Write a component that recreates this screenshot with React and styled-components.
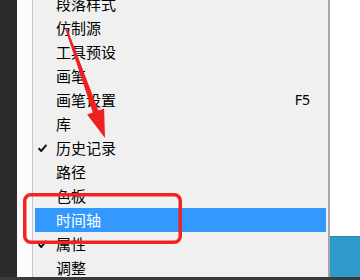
import React from "react";
import styled, { createGlobalStyle } from "styled-components";

const GlobalStyle = createGlobalStyle`
  html, body {
    margin: 0;
    padding: 0;
    background: #fff;
  }
  body {
    font-family: "Noto Sans CJK SC", "Noto Sans", sans-serif;
  }
`;

const ITEMS = [
  { label: "段落样式" },
  { label: "仿制源" },
  { label: "工具预设" },
  { label: "画笔" },
  { label: "画笔设置", shortcut: "F5" },
  { label: "库" },
  { label: "历史记录", checked: true },
  { label: "路径" },
  { label: "色板" },
  { label: "时间轴", active: true },
  { label: "属性", checked: true },
  { label: "调整" },
];

const Check = () => (
  <svg width="9" height="8" viewBox="0 0 9 8">
    <path d="M0.5 4.2 L3.2 7 L8.5 0.8" fill="none" stroke="#111" strokeWidth="2" />
  </svg>
);

const Annotation = () => (
  <Overlay width="360" height="280" viewBox="0 0 360 280">
    <rect
      x="24.75"
      y="194.75"
      width="155.5"
      height="47.5"
      rx="6"
      fill="none"
      stroke="#f02424"
      strokeWidth="3.5"
    />
    <polygon
      points="65.1,28.3 92.8,112.6 87.1,114.6 105,138 104.1,108.6 98.4,110.6 66.9,27.7"
      fill="#ee2020"
    />
  </Overlay>
);

export default function App() {
  return (
    <>
      <GlobalStyle />
      <Page>
        <Main>
          <LeftStrip />
          <Menu>
            <Gutter />
            <List>
              {ITEMS.map((it) => (
                <Item key={it.label} $active={it.active}>
                  <CheckCell>{it.checked && <Check />}</CheckCell>
                  <Label>{it.label}</Label>
                  <Shortcut>{it.shortcut}</Shortcut>
                </Item>
              ))}
            </List>
          </Menu>
          <RightPane>
            <WhiteArea />
            <BluePanel />
          </RightPane>
        </Main>
        <BottomBar />
        <Annotation />
      </Page>
    </>
  );
}

const Page = styled.div`
  position: relative;
  width: 360px;
  height: 280px;
  overflow: hidden;
  display: flex;
  flex-direction: column;
`;

const Main = styled.div`
  flex: 1;
  display: flex;
  min-height: 0;
`;

const LeftStrip = styled.div`
  width: 17px;
  background: #2b2b2b;
`;

const Menu = styled.div`
  width: 313px;
  display: flex;
  background: #f0f0f0;
  border-right: 2px solid #a6a6a6;
  box-sizing: border-box;
  overflow: hidden;
`;

const Gutter = styled.div`
  width: 15px;
  background: #fcfcfc;
  border-right: 1px solid #c6c6c6;
`;

const List = styled.div`
  flex: 1;
  padding: 0 2px;
  margin-top: -8px;
  display: flex;
  flex-direction: column;
`;

const Item = styled.div`
  height: 24px;
  display: grid;
  grid-template-columns: 21px 1fr auto;
  align-items: center;
  padding-right: 16px;
  background: ${(p) => (p.$active ? "#3399ff" : "transparent")};
  color: ${(p) => (p.$active ? "#fff" : "#000")};
`;

const CheckCell = styled.div`
  display: flex;
  align-items: center;
  padding-left: 3px;
`;

const Label = styled.span`
  font-size: 15px;
  line-height: 24px;
  white-space: nowrap;
`;

const Shortcut = styled.span`
  font-family: "Noto Sans", "Liberation Sans", sans-serif;
  font-size: 14px;
  line-height: 24px;
`;

const RightPane = styled.div`
  flex: 1;
  display: flex;
  flex-direction: column;
`;

const WhiteArea = styled.div`
  flex: 1;
  background: #fff;
`;

const BluePanel = styled.div`
  height: 41px;
  background: #2f9bcb;
  border-top: 1px solid #2685b2;
  box-sizing: border-box;
`;

const BottomBar = styled.div`
  height: 3px;
  background: #3a3a3a;
`;

const Overlay = styled.svg`
  position: absolute;
  left: 0;
  top: 0;
  pointer-events: none;
`;
